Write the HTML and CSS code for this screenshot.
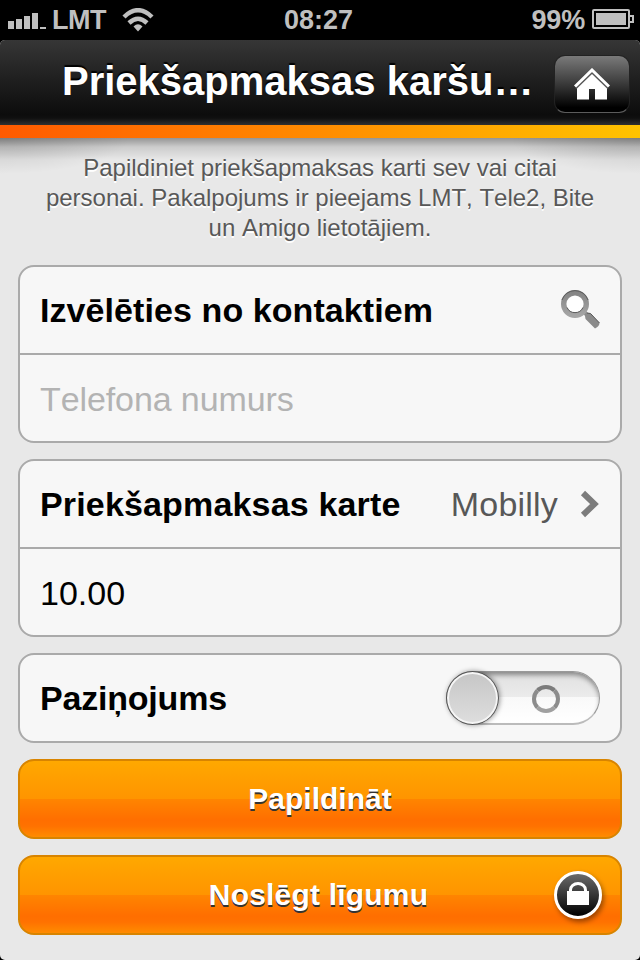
FILE: index.html
```html
<!DOCTYPE html>
<html lang="lv">
<head>
  <meta charset="UTF-8" />
  <title>Priekšapmaksas karte</title>
  <link rel="stylesheet" href="styles.css">
</head>
<body>
  <div class="statusbar">
    <div class="status-left">
      <svg class="signal" width="38" height="17" viewBox="0 0 38 17" fill="#bfbfbf">
        <path d="M0 8h6v8H0zM8 6h6v10H8zM16 3h6v13h-6zM24 0h6v16h-6zM32 14h6v2h-6z"/>
      </svg>
      <span class="carrier">LMT</span>
      <svg class="wifi" width="32" height="24" viewBox="0 0 32 24">
        <g fill="none" stroke="#bfbfbf" stroke-width="4.500">
          <path d="M2 9Q16-4.500 30 9"/>
          <path d="M7 15Q16 6.500 25 15"/>
        </g>
        <path d="M11.500 18.500Q16 14 20.500 18.500L16 23.500z" fill="#bfbfbf"/>
      </svg>
    </div>
    <span class="clock">08:27</span>
    <div class="status-right">
      <span class="percent">99%</span>
      <svg class="battery" width="42" height="20" viewBox="0 0 42 20">
        <rect x="1" y="1" width="36" height="18" rx="1" fill="none" stroke="#bfbfbf" stroke-width="2"/>
        <path d="M4 4h30v12H4z" fill="#bfbfbf"/>
        <path d="M37 7h4v6h-4" fill="none" stroke="#bfbfbf" stroke-width="2"/>
      </svg>
    </div>
  </div>

  <div class="screen">
    <header class="header">
      <h1>Priekšapmaksas karšu…</h1>
      <button class="home">
        <svg width="36" height="32" viewBox="0 0 36 32">
          <path d="M18 4.500L33 19v12.500H21V21h-6v10.500H3V19z" fill="#fff"/>
          <path d="M2 20.500L18 5l16 15.500" fill="none" stroke="#555" stroke-width="1.500"/>
          <path d="M1 18.500L18 2l17 16.500" fill="none" stroke="#fff" stroke-width="3"/>
        </svg>
      </button>
    </header>
    <div class="stripe"></div>

    <main class="content">
      <p class="intro">Papildiniet priekšapmaksas karti sev vai citai<br>personai. Pakalpojums ir pieejams LMT, Tele2, Bite<br>un Amigo lietotājiem.</p>

      <div class="card">
        <div class="row">
          <span class="label contacts">Izvēlēties no kontaktiem</span>
          <svg width="40" height="40" viewBox="0 0 40 40">
            <defs>
              <linearGradient id="lens" x1="0" y1="0" x2="0" y2="1">
                <stop offset="0" stop-color="#858585"/>
                <stop offset="1" stop-color="#a5a5a5"/>
              </linearGradient>
            </defs>
            <path d="M22.500 22.500l2.500-2.500 3 3 2.500.500 9 9.500q0 3-4.500 5.500l-9.500-9.500-.500-3z" fill="#8b8b8b"/>
            <path d="M27 23l3.500.500 9 9.500" stroke="#555" fill="none"/>
            <circle cx="15" cy="14" r="11.300" fill="#fff" stroke="url(#lens)" stroke-width="5.400"/>
            <path d="M2 10a13.700 13.700 0 0 1 26 0M7 17.500a8.800 8.800 0 0 0 16 0" fill="none" stroke="#5c5c5c"/>
          </svg>
        </div>
        <div class="row">
          <input class="phone" type="text" placeholder="Telefona numurs">
        </div>
      </div>

      <div class="card">
        <div class="row">
          <span class="label card-type">Priekšapmaksas karte</span>
          <span class="value">Mobilly</span>
          <svg class="chevron" width="20" height="28" viewBox="0 0 20 28">
            <path d="M3 3l11.500 11L3 25" fill="none" stroke="#7c7c7c" stroke-width="6"/>
          </svg>
        </div>
        <div class="row">
          <input class="amount" type="text" value="10.00">
        </div>
      </div>

      <div class="card">
        <div class="row">
          <span class="label notice">Paziņojums</span>
          <div class="toggle">
            <div class="knob"></div>
            <div class="off"></div>
          </div>
        </div>
      </div>

      <button class="btn"><span class="topup">Papildināt</span></button>
      <button class="btn">
        <span class="contract">Noslēgt līgumu</span>
        <span class="lock">
          <svg width="22" height="24" viewBox="0 0 22 24">
            <path d="M0 9h22v14H0z" fill="#fff"/>
            <path d="M3.500 10V8a7.500 6.500 0 0 1 15 0v2" fill="none" stroke="#fff" stroke-width="3"/>
          </svg>
        </span>
      </button>
    </main>
  </div>
</body>
</html>
```

FILE: styles.css
```css
* {
  box-sizing: border-box;
}
body {
  margin: 0;
  width: 640px;
  height: 960px;
  overflow: hidden;
  background: #000;
  font-family: "Liberation Sans", Arial, sans-serif;
  font-kerning: none;
}
button, input {
  font-family: inherit;
  font-kerning: none;
  border: none;
  padding: 0;
}
.statusbar {
  height: 40px;
  display: grid;
  grid-template-columns: 1fr auto 1fr;
  align-items: center;
  padding: 0 6px 0 8px;
  color: #bfbfbf;
  font-size: 27px;
  font-weight: bold;
}
.status-left, .status-right {
  display: flex;
  align-items: center;
}
.status-right {
  justify-content: flex-end;
  gap: 7px;
}
.signal {
  margin: 2px 6px 0 0;
}
.carrier {
  letter-spacing: -0.5px;
}
.wifi {
  margin-left: 16px;
}
.clock {
  margin-right: 5px;
}
.percent {
  letter-spacing: -0.2px;
}
.battery {
  margin-bottom: 2px;
}
.screen {
  height: 920px;
  background: #e8e8e8;
  border-radius: 5px;
  overflow: hidden;
}
.header {
  height: 85px;
  display: flex;
  align-items: center;
  padding: 0 10px 0 62px;
  background: linear-gradient(#363636, #202020 45%, #0c0c0c 88%, #101010 92%, #303030);
}
h1 {
  flex: 1;
  margin: 0 0 4px;
  color: #fff;
  font-size: 40px;
  line-height: 46px;
  white-space: nowrap;
  text-shadow: 0 -2px 1px #000;
}
.home {
  width: 76px;
  height: 58px;
  margin-top: 3px;
  border-radius: 11px;
  display: flex;
  align-items: center;
  justify-content: center;
  background: linear-gradient(#7a7a7a, #404040 45%, #000 92%);
  border: 1px solid #222;
  border-bottom: 1px solid #5c5c5c;
}
.stripe {
  height: 13px;
  background: linear-gradient(90deg, #ff5a00, #ff8c00 50%, #ffc300);
}
.content {
  display: flex;
  flex-direction: column;
  gap: 16px;
  padding: 15px 18px 0;
  background:
    radial-gradient(ellipse 130px 36px at 0 0, rgba(0, 0, 0, .16), transparent),
    radial-gradient(ellipse 130px 36px at 100% 0, rgba(0, 0, 0, .16), transparent),
    linear-gradient(rgba(0, 0, 0, .36), rgba(0, 0, 0, .12) 9px, transparent 22px);
}
.intro {
  margin: 0 0 6px;
  color: #585858;
  font-size: 24px;
  line-height: 30px;
  text-align: center;
  white-space: nowrap;
  text-shadow: 0 2px 0 #fff;
}
.card {
  background: #f7f7f7;
  border: 2px solid #aaa;
  border-radius: 16px;
}
.row {
  height: 86px;
  display: flex;
  align-items: center;
  padding: 0 20px;
  font-size: 34px;
}
.row + .row {
  height: 88px;
  border-top: 2px solid #aaa;
}
.label {
  flex: 1;
  font-weight: bold;
  white-space: nowrap;
}
.contacts {
  letter-spacing: 0.08px;
}
.card-type {
  letter-spacing: 0.16px;
}
.notice {
  letter-spacing: -0.2px;
}
.value {
  color: #585858;
  letter-spacing: 0.2px;
}
.chevron {
  margin-left: 22px;
}
.row input {
  width: 100%;
  height: 60px;
  margin-top: 2px;
  background: none;
  font-size: 34px;
  color: #000;
  outline: none;
}
.row input::placeholder {
  color: #b3b3b3;
}
.phone {
  letter-spacing: -0.1px;
}
.toggle {
  width: 154px;
  height: 54px;
  border-radius: 27px;
  display: flex;
  align-items: center;
  background: linear-gradient(#e0e0e0, #ececec 50%, #f9f9f9 50%, #fff);
  border: 1px solid #999;
  border-bottom: 2px solid #bbb;
  box-shadow: inset 0 4px 5px -1px rgba(0, 0, 0, .4);
}
.knob {
  width: 53px;
  height: 54px;
  margin-left: -1px;
  border-radius: 50%;
  background: linear-gradient(#c6c6c6, #dedede);
  border: 1px solid #555;
  box-shadow: inset 0 0 0 2px #f5f5f5, 1px 0 5px rgba(0, 0, 0, .4);
}
.off {
  width: 28px;
  height: 28px;
  margin: 2px 0 0 33px;
  border-radius: 50%;
  border: 4px solid #8c8c8c;
  border-top-color: #7c7c7c;
  border-bottom-color: #a0a0a0;
}
.btn {
  height: 80px;
  display: grid;
  grid-template-columns: 1fr auto 1fr;
  align-items: center;
  padding: 0 18px;
  border: 2px solid #d88400;
  border-radius: 16px;
  background: linear-gradient(#ffa800, #ff9400 50%, #ff8500 50%, #ff6e00 78%, #ff7200 86%, #ff8c00);
  color: #fff;
  font-size: 30px;
  font-weight: bold;
  text-shadow: 0 2px 0 #333;
}
.btn span:first-child {
  grid-column: 2;
}
.contract {
  margin-right: 3px;
  letter-spacing: 0.2px;
}
.lock {
  justify-self: end;
  width: 48px;
  height: 48px;
  border-radius: 50%;
  border: 3px solid #fff;
  display: flex;
  align-items: center;
  justify-content: center;
  background: linear-gradient(#6a6a6a, #000);
  box-shadow: 2px 3px 5px rgba(0, 0, 0, .4);
}
.lock svg {
  margin-bottom: 3px;
}
```
